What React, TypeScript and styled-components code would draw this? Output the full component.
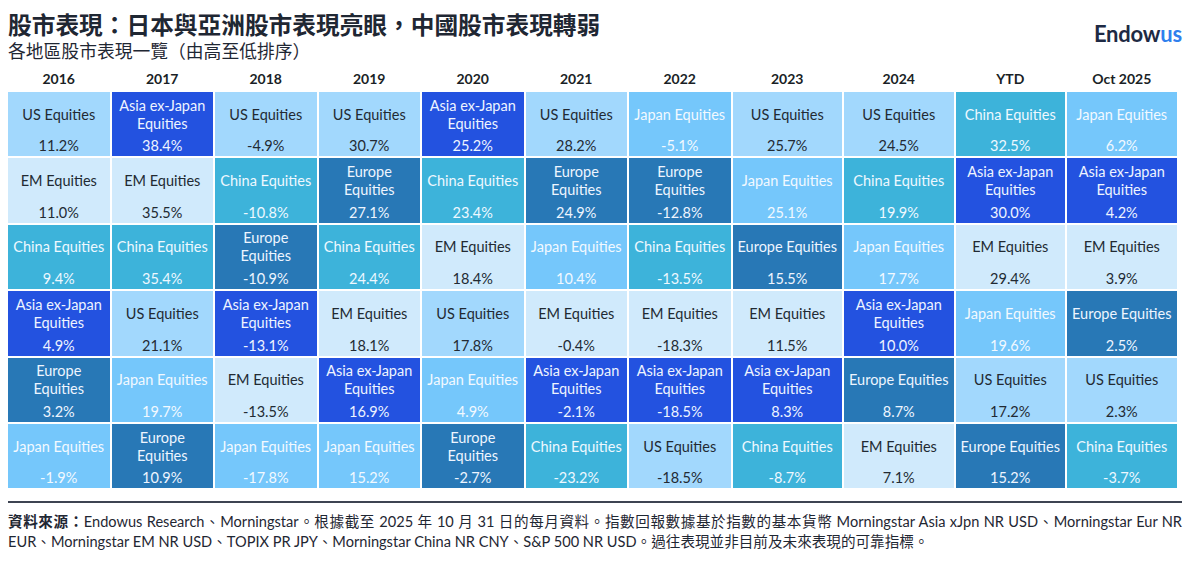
import React from 'react';
import styled, { createGlobalStyle } from 'styled-components';

type Kind = 'us' | 'asia' | 'em' | 'china' | 'europe' | 'japan';

const palette: Record<Kind, { bg: string; fg: string; label: string[] }> = {
  us: { bg: '#a2d8fd', fg: '#222a33', label: ['US Equities'] },
  asia: { bg: '#2352e0', fg: '#eef4ff', label: ['Asia ex-Japan', 'Equities'] },
  em: { bg: '#d0eafc', fg: '#222a33', label: ['EM Equities'] },
  china: { bg: '#3db3da', fg: '#eef8ff', label: ['China Equities'] },
  europe: { bg: '#2878b6', fg: '#eef5ff', label: ['Europe', 'Equities'] },
  japan: { bg: '#75c7fb', fg: '#f2f9ff', label: ['Japan Equities'] },
};

// Europe wraps to two lines only in the narrow columns
const columns: { year: string; wide?: boolean; cells: [Kind, string][] }[] = [
  { year: '2016', cells: [['us', '11.2%'], ['em', '11.0%'], ['china', '9.4%'], ['asia', '4.9%'], ['europe', '3.2%'], ['japan', '-1.9%']] },
  { year: '2017', cells: [['asia', '38.4%'], ['em', '35.5%'], ['china', '35.4%'], ['us', '21.1%'], ['japan', '19.7%'], ['europe', '10.9%']] },
  { year: '2018', cells: [['us', '-4.9%'], ['china', '-10.8%'], ['europe', '-10.9%'], ['asia', '-13.1%'], ['em', '-13.5%'], ['japan', '-17.8%']] },
  { year: '2019', cells: [['us', '30.7%'], ['europe', '27.1%'], ['china', '24.4%'], ['em', '18.1%'], ['asia', '16.9%'], ['japan', '15.2%']] },
  { year: '2020', cells: [['asia', '25.2%'], ['china', '23.4%'], ['em', '18.4%'], ['us', '17.8%'], ['japan', '4.9%'], ['europe', '-2.7%']] },
  { year: '2021', cells: [['us', '28.2%'], ['europe', '24.9%'], ['japan', '10.4%'], ['em', '-0.4%'], ['asia', '-2.1%'], ['china', '-23.2%']] },
  { year: '2022', cells: [['japan', '-5.1%'], ['europe', '-12.8%'], ['china', '-13.5%'], ['em', '-18.3%'], ['asia', '-18.5%'], ['us', '-18.5%']] },
  { year: '2023', wide: true, cells: [['us', '25.7%'], ['japan', '25.1%'], ['europe', '15.5%'], ['em', '11.5%'], ['asia', '8.3%'], ['china', '-8.7%']] },
  { year: '2024', wide: true, cells: [['us', '24.5%'], ['china', '19.9%'], ['japan', '17.7%'], ['asia', '10.0%'], ['europe', '8.7%'], ['em', '7.1%']] },
  { year: 'YTD', wide: true, cells: [['china', '32.5%'], ['asia', '30.0%'], ['em', '29.4%'], ['japan', '19.6%'], ['us', '17.2%'], ['europe', '15.2%']] },
  { year: 'Oct 2025', wide: true, cells: [['japan', '6.2%'], ['asia', '4.2%'], ['em', '3.9%'], ['europe', '2.5%'], ['us', '2.3%'], ['china', '-3.7%']] },
];

const GlobalStyle = createGlobalStyle`
  * { box-sizing: border-box; }
  body {
    margin: 0;
    background: #fff;
    font-family: Lato, "Noto Sans CJK TC", sans-serif;
    color: #222a33;
  }
`;

export default function App() {
  return (
    <>
      <GlobalStyle />
      <Page>
        <Header>
          <div>
            <Title>股市表現：日本與亞洲股市表現亮眼，中國股市表現轉弱</Title>
            <Subtitle>各地區股市表現一覽（由高至低排序）</Subtitle>
          </div>
          <Logo>
            Endow<span>us</span>
          </Logo>
        </Header>

        <Table>
          {columns.map((col) => (
            <Column key={col.year}>
              <YearHead>{col.year}</YearHead>
              {col.cells.map(([kind, value], i) => {
                const p = palette[kind];
                const label = kind === 'europe' && col.wide ? ['Europe Equities'] : p.label;
                return (
                  <Cell key={i} $bg={p.bg} $fg={p.fg}>
                    <Label>
                      {label.map((l) => (
                        <span key={l}>{l}</span>
                      ))}
                    </Label>
                    <Value>{value}</Value>
                  </Cell>
                );
              })}
            </Column>
          ))}
        </Table>

        <Footer>
          <strong>資料來源：</strong>Endowus Research、Morningstar。根據截至 2025 年 10 月 31 日的每月資料。指數回報數據基於指數的基本貨幣 Morningstar Asia xJpn NR USD、Morningstar Eur NR EUR、Morningstar EM NR USD、TOPIX PR JPY、Morningstar China NR CNY、S&amp;P 500 NR USD。過往表現並非目前及未來表現的可靠指標。
        </Footer>
      </Page>
    </>
  );
}

const Page = styled.div`
  width: 1198px;
  height: 562px;
  padding: 10px 16px 0 8px;
  display: flex;
  flex-direction: column;
`;

const Header = styled.header`
  display: flex;
  justify-content: space-between;
  align-items: flex-start;
`;

const Title = styled.h1`
  margin: 0;
  font-size: 23.7px;
  line-height: 30px;
  font-weight: 700;
  color: #1f2733;
`;

const Subtitle = styled.h2`
  margin: 0;
  font-size: 17.8px;
  line-height: 22px;
  font-weight: 400;
  color: #1f2733;
`;

const Logo = styled.div`
  margin-top: 10px;
  font-family: Lato, sans-serif;
  font-weight: 700;
  font-size: 22px;
  letter-spacing: -0.2px;
  color: #1e2a44;

  span {
    color: #2f80ed;
  }
`;

const Table = styled.div`
  margin-top: 6px;
  display: grid;
  grid-template-columns: repeat(7, 103.5px) repeat(4, 111.5px);
`;

const Column = styled.div`
  display: grid;
  grid-template-rows: 22px repeat(6, 64.4px);
  row-gap: 2px;
  padding-right: 2px;
`;

const YearHead = styled.div`
  font-size: 14px;
  font-weight: 700;
  text-align: center;
  line-height: 22px;
  color: #1a1f26;
`;

const Cell = styled.div<{ $bg: string; $fg: string }>`
  background: ${(p) => p.$bg};
  color: ${(p) => p.$fg};
  display: flex;
  flex-direction: column;
  align-items: center;
  font-size: 14.5px;
  text-align: center;
  white-space: nowrap;
`;

const Label = styled.div`
  flex: 1;
  display: flex;
  flex-direction: column;
  justify-content: center;
  line-height: 18px;
`;

const Value = styled.div`
  line-height: 18px;
  padding-bottom: 1px;
`;

const Footer = styled.p`
  margin: 13px 0 0;
  padding-top: 9px;
  border-top: 2px solid #3d4452;
  font-size: 14.6px;
  line-height: 20px;
  text-align: justify;
  color: #1f2733;

  strong {
    font-weight: 700;
  }
`;
